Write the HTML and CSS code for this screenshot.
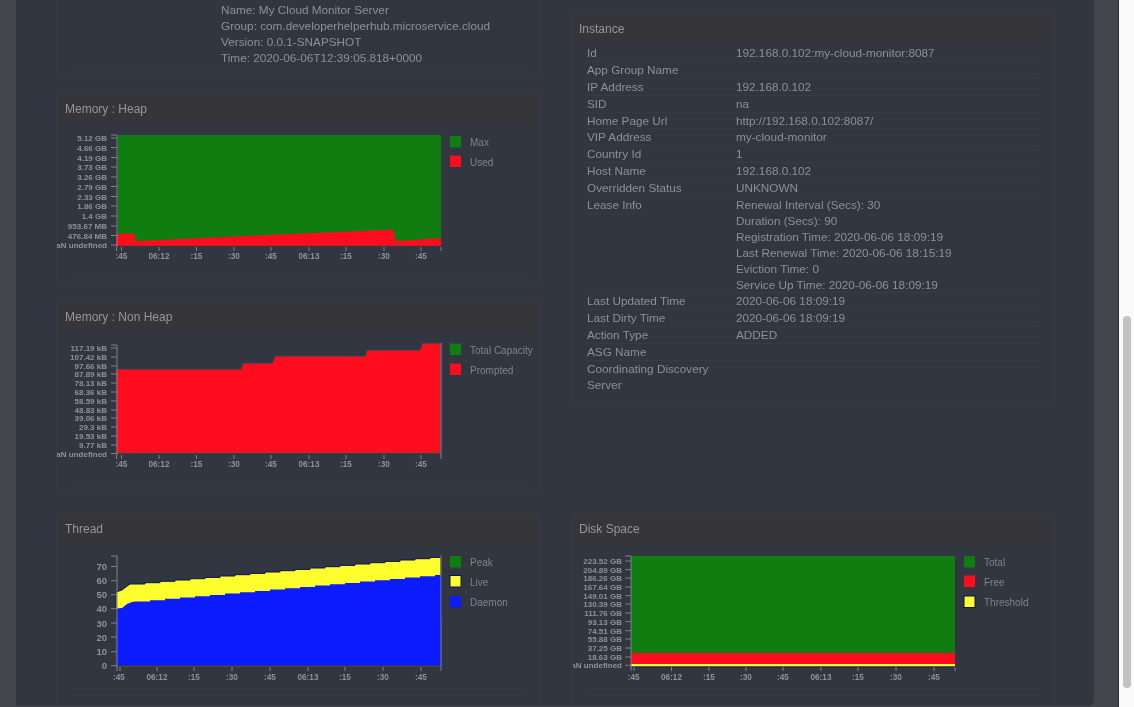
FILE: index.html
```html
<!DOCTYPE html>
<html lang="en">
<head>
<meta charset="utf-8">
<title>Spring Boot Admin Monitor</title>
<link rel="stylesheet" href="styles.css">
</head>
<body>
<div class="window">
  <div class="side-strip"></div>
  <main class="panel">
    <div class="columns">
      <div class="column">
        <section class="card card-top">
          <div class="build">
            <div>Name: My Cloud Monitor Server</div>
            <div>Group: com.developerhelperhub.microservice.cloud</div>
            <div>Version: 0.0.1-SNAPSHOT</div>
            <div>Time: 2020-06-06T12:39:05.818+0000</div>
          </div>
          <div class="rule"></div>
        </section>

        <section class="card">
          <h2 class="card-head">Memory : Heap</h2>
          <svg class="chart" width="482" height="150" viewBox="57 125 482 150">
            <rect class="c-green" x="118" y="135" width="323" height="110.5"/>
            <path class="c-red" d="M116 234L134 233.5L136 241L393 229.5L396 241L441 238V245.7H116Z"/>
            <g class="axis">
              <path d="M111 135H117V247M111 138H117M111 147.6H117M111 157.5H117M111 167H117M111 177H117M111 186.5H117M111 196.5H117M111 206H117M111 216H117M111 226H117M111 235.5H117M111 245H117"/>
              <path d="M116.5 247V251M121.5 247V251M159 247V251M196.5 247V251M234 247V251M271 247V251M309 247V251M346 247V251M384 247V251M421 247V251M441 247V251"/>
            </g>
            <g class="y-labels">
              <text x="107" y="141">5.12 GB</text><text x="107" y="150.6">4.66 GB</text><text x="107" y="160.5">4.19 GB</text><text x="107" y="170">3.73 GB</text><text x="107" y="180">3.26 GB</text><text x="107" y="189.5">2.79 GB</text><text x="107" y="199.5">2.33 GB</text><text x="107" y="209">1.86 GB</text><text x="107" y="219">1.4 GB</text><text x="107" y="229">953.67 MB</text><text x="107" y="238.5">476.84 MB</text><text x="107" y="248">NaN undefined</text>
            </g>
            <g class="x-labels">
              <text x="121.5" y="259">:45</text><text x="159" y="259">06:12</text><text x="196.5" y="259">:15</text><text x="234" y="259">:30</text><text x="271" y="259">:45</text><text x="309" y="259">06:13</text><text x="346" y="259">:15</text><text x="384" y="259">:30</text><text x="421" y="259">:45</text>
            </g>
            <rect class="c-green" x="450" y="136" width="11" height="11.5"/>
            <rect class="c-red" x="450" y="155.5" width="11" height="11.5"/>
            <text class="legend" x="470" y="146">Max</text>
            <text class="legend" x="470" y="165.5">Used</text>
          </svg>
          <div class="rule"></div>
        </section>

        <section class="card">
          <h2 class="card-head">Memory : Non Heap</h2>
          <svg class="chart" width="482" height="151" viewBox="57 333 482 151">
            <path class="c-red edge" d="M116 369H241L243 363H272L275 356H365L367 350H420L422 343H441V453.5H116Z"/>
            <g class="axis">
              <path d="M111 345H117V455M111 348H117M111 357H117M111 366H117M111 374H117M111 383H117M111 392H117M111 401H117M111 410H117M111 418H117M111 427H117M111 436H117M111 445H117M111 453.5H117"/>
              <path d="M116.5 455V459M121.5 455V459M159 455V459M196.5 455V459M234 455V459M271 455V459M309 455V459M346 455V459M384 455V459M421 455V459M441 343V459"/>
            </g>
            <g class="y-labels">
              <text x="107" y="351">117.19 kB</text><text x="107" y="360">107.42 kB</text><text x="107" y="369">97.66 kB</text><text x="107" y="377">87.89 kB</text><text x="107" y="386">78.13 kB</text><text x="107" y="395">68.36 kB</text><text x="107" y="404">58.59 kB</text><text x="107" y="413">48.83 kB</text><text x="107" y="421">39.06 kB</text><text x="107" y="430">29.3 kB</text><text x="107" y="439">19.53 kB</text><text x="107" y="448">9.77 kB</text><text x="107" y="456.5">NaN undefined</text>
            </g>
            <g class="x-labels">
              <text x="121.5" y="467">:45</text><text x="159" y="467">06:12</text><text x="196.5" y="467">:15</text><text x="234" y="467">:30</text><text x="271" y="467">:45</text><text x="309" y="467">06:13</text><text x="346" y="467">:15</text><text x="384" y="467">:30</text><text x="421" y="467">:45</text>
            </g>
            <rect class="c-green" x="450" y="343.5" width="11" height="11.5"/>
            <rect class="c-red" x="450" y="363.5" width="11" height="11.5"/>
            <text class="legend" x="470" y="354">Total Capacity</text>
            <text class="legend" x="470" y="373.5">Prompted</text>
          </svg>
          <div class="rule"></div>
        </section>
      </div>

      <div class="column column-right">
        <section class="card card-narrow">
          <h2 class="card-head">Instance</h2>
          <div class="table">
            <div class="row"><span>Id</span><span>192.168.0.102:my-cloud-monitor:8087</span></div>
            <div class="row"><span>App Group Name</span><span></span></div>
            <div class="row"><span>IP Address</span><span>192.168.0.102</span></div>
            <div class="row"><span>SID</span><span>na</span></div>
            <div class="row"><span>Home Page Url</span><span>http://192.168.0.102:8087/</span></div>
            <div class="row"><span>VIP Address</span><span>my-cloud-monitor</span></div>
            <div class="row"><span>Country Id</span><span>1</span></div>
            <div class="row"><span>Host Name</span><span>192.168.0.102</span></div>
            <div class="row"><span>Overridden Status</span><span>UNKNOWN</span></div>
            <div class="row row-multi"><span>Lease Info</span><span>Renewal Interval (Secs): 30<br>Duration (Secs): 90<br>Registration Time: 2020-06-06 18:09:19<br>Last Renewal Time: 2020-06-06 18:15:19<br>Eviction Time: 0<br>Service Up Time: 2020-06-06 18:09:19</span></div>
            <div class="row"><span>Last Updated Time</span><span>2020-06-06 18:09:19</span></div>
            <div class="row"><span>Last Dirty Time</span><span>2020-06-06 18:09:19</span></div>
            <div class="row"><span>Action Type</span><span>ADDED</span></div>
            <div class="row"><span>ASG Name</span><span></span></div>
            <div class="row row-multi row-last"><span>Coordinating Discovery Server</span><span></span></div>
          </div>
        </section>
      </div>

      <section class="card card-low">
        <h2 class="card-head">Thread</h2>
        <svg class="chart" width="482" height="150" viewBox="57 545 482 150">
          <path class="c-yellow edge-navy" d="M116 592L122 590L130 584H145V582.7H160V581.3H175V580H190V578.7H205V577.4H220V576H235V574.7H250V573.4H265V572H280V570.7H295V569.4H310V568H325V566.7H340V565.4H355V564H370V562.7H385V561.4H400V560H415V558.7H430V557.4H441V555V620H116Z"/>
          <path class="c-blue" d="M116 608.5L122 608L127 604L132 602L135 601.5H150V600.2H165V598.8H180V597.5H195V596.2H210V594.9H225V593.5H240V592.2H255V590.9H270V589.5H285V588.2H300V586.9H315V585.5H330V584.2H345V582.9H360V581.5H375V580.2H390V578.9H405V577.5H420V576.2H435V574.9H441V573V665.5H116Z"/>
          <path class="olive" d="M116 609V666.5H441"/>
          <g class="axis">
            <path d="M111 556H117V592M117 667V592M111 566.5H117M111 580.7H117M111 594.7H117M111 608.7H117M111 623H117M111 637H117M111 651.7H117M111 665.7H117"/>
            <path d="M117 667V671M120 667V671M157 667V671M194 667V671M232 667V671M270 667V671M308 667V671M345 667V671M383 667V671M421 667V671M441 555V671"/>
          </g>
          <g class="y-labels y-large">
            <text x="107" y="570">70</text><text x="107" y="584.2">60</text><text x="107" y="598.2">50</text><text x="107" y="612.2">40</text><text x="107" y="626.5">30</text><text x="107" y="640.5">20</text><text x="107" y="655">10</text><text x="107" y="669">0</text>
          </g>
          <g class="x-labels">
            <text x="119" y="680">:45</text><text x="157" y="680">06:12</text><text x="194" y="680">:15</text><text x="232" y="680">:30</text><text x="270" y="680">:45</text><text x="308" y="680">06:13</text><text x="345" y="680">:15</text><text x="383" y="680">:30</text><text x="421" y="680">:45</text>
          </g>
          <rect class="c-green" x="450" y="556" width="11" height="11.5"/>
          <rect class="c-yellow edge-navy" x="450" y="575.5" width="11" height="11.5"/>
          <rect class="c-blue" x="450" y="596" width="11" height="11.5"/>
          <text class="legend" x="470" y="566">Peak</text>
          <text class="legend" x="470" y="586">Live</text>
          <text class="legend" x="470" y="606">Daemon</text>
        </svg>
        <div class="rule"></div>
      </section>

      <section class="card card-low card-narrow">
        <h2 class="card-head">Disk Space</h2>
        <svg class="chart" width="480" height="150" viewBox="573 545 480 150">
          <rect class="c-green" x="631" y="556" width="324" height="97"/>
          <rect class="c-red" x="631" y="653" width="324" height="11"/>
          <rect class="c-yellow" x="631" y="664" width="324" height="2.5"/>
          <rect class="c-navy" x="631" y="666.5" width="325" height="1"/>
          <g class="axis">
            <path d="M625 556H631V668M625 561H631M625 569.7H631M625 578H631M625 587H631M625 595.7H631M625 604H631M625 613H631M625 621.7H631M625 630.7H631M625 639H631M625 648H631M625 657H631M625 665.3H631"/>
            <path d="M631 667V671M634 667V671M671.5 667V671M709 667V671M746 667V671M783 667V671M821 667V671M858 667V671M896 667V671M934 667V671M955 667V671"/>
          </g>
          <g class="y-labels">
            <text x="622" y="564">223.52 GB</text><text x="622" y="572.7">204.89 GB</text><text x="622" y="581">186.26 GB</text><text x="622" y="590">167.64 GB</text><text x="622" y="598.7">149.01 GB</text><text x="622" y="607">130.39 GB</text><text x="622" y="616">111.76 GB</text><text x="622" y="624.7">93.13 GB</text><text x="622" y="633.7">74.51 GB</text><text x="622" y="642">55.88 GB</text><text x="622" y="651">37.25 GB</text><text x="622" y="660">18.63 GB</text><text x="622" y="668.3">NaN undefined</text>
          </g>
          <g class="x-labels">
            <text x="633.7" y="680">:45</text><text x="671.5" y="680">06:12</text><text x="709" y="680">:15</text><text x="746" y="680">:30</text><text x="783" y="680">:45</text><text x="821" y="680">06:13</text><text x="858" y="680">:15</text><text x="896" y="680">:30</text><text x="934" y="680">:45</text>
          </g>
          <rect class="c-green" x="964" y="556" width="11" height="11.5"/>
          <rect class="c-red" x="964" y="575.5" width="11" height="11.5"/>
          <rect class="c-yellow edge-navy" x="964" y="596" width="11" height="11.5"/>
          <text class="legend" x="984" y="566">Total</text>
          <text class="legend" x="984" y="586">Free</text>
          <text class="legend" x="984" y="606">Threshold</text>
        </svg>
        <div class="rule"></div>
      </section>
    </div>
  </main>
  <div class="gutter"></div>
  <div class="scrollbar"><div class="thumb"></div></div>
</div>
</body>
</html>
```

FILE: styles.css
```css
html, body {
  margin: 0;
  height: 100%;
  overflow: hidden;
  background: #45464b;
}

body {
  font-family: "Liberation Sans", Arial, sans-serif;
  font-size: 11.75px;
  color: #8c909a;
}

.window {
  display: flex;
  width: 1134px;
  height: 707px;
  overflow: hidden;
  filter: blur(0.45px);
}

.side-strip {
  flex: 0 0 16px;
  background: #45464b;
}

.panel {
  flex: 0 0 1078px;
  height: 706px;
  overflow: hidden;
  background: #323640;
  border-bottom-right-radius: 6px;
  padding-left: 40px;
  box-sizing: border-box;
}

.gutter {
  flex: 0 0 24px;
  background: #45464b;
}

.scrollbar {
  flex: 0 0 16px;
  box-sizing: border-box;
  background: #fafafa;
  border-left: 1px solid #2c2d30;
  padding: 316px 3px 19px 4px;
}

.thumb {
  height: 100%;
  background: #c2c2c2;
  border-radius: 4px;
}

.columns {
  display: grid;
  grid-template-columns: 484px 482px;
  column-gap: 32px;
  row-gap: 21px;
  align-items: start;
}

.column {
  display: flex;
  flex-direction: column;
  gap: 17px;
}

.column-right {
  padding-top: 13px;
}

.card {
  box-sizing: border-box;
  border: 1px solid #373b46;
  padding-bottom: 6px;
}

.column > .card:nth-child(3) {
  margin-top: 1px;
}

.card-top {
  border-top: 0;
  padding-top: 2px;
  padding-bottom: 8px;
}

.card-low {
  height: 210px;
}

.build {
  padding-left: 164px;
  line-height: 16px;
}

.rule {
  height: 1px;
  margin: 0 15px;
  background: #373b46;
}

.card-head {
  margin: 0;
  height: 31px;
  padding-left: 8px;
  background: #35353a;
  font-size: 12px;
  font-weight: 400;
  line-height: 31px;
  color: #94979e;
}

.card-narrow .card-head {
  padding-left: 6px;
}

.chart {
  display: block;
}

.table {
  padding: 0 15px 4px 14px;
}

.row {
  display: grid;
  grid-template-columns: 149px 1fr;
  box-sizing: border-box;
  height: 16.9px;
  line-height: 16px;
  border-bottom: 1px solid #373b46;
}

.row-multi {
  height: 96px;
}

.row-last {
  height: auto;
  border-bottom: 0;
}

.c-green { fill: #0f7d10; }
.c-red { fill: #ff0d1e; }
.c-yellow { fill: #ffff2e; }
.c-blue { fill: #0c1cff; }
.c-navy { fill: #101a5a; }

.edge {
  stroke: #1c4a55;
  stroke-width: 1;
}

.edge-navy {
  stroke: #0b1450;
  stroke-width: 1;
}

.olive {
  fill: none;
  stroke: #4d4a12;
  stroke-width: 1;
}

.axis path {
  fill: none;
  stroke: #7d818b;
  stroke-width: 1;
}

.y-labels text {
  font-family: "Liberation Sans", Arial, sans-serif;
  font-size: 8px;
  font-weight: 700;
  fill: #8e929c;
  text-anchor: end;
}

.y-labels.y-large text {
  font-size: 9.5px;
}

.x-labels text {
  font-family: "Liberation Sans", Arial, sans-serif;
  font-size: 8.2px;
  font-weight: 700;
  fill: #8e929c;
  text-anchor: middle;
}

.legend {
  font-family: "Liberation Sans", Arial, sans-serif;
  font-size: 10px;
  fill: #7f838d;
}
```
